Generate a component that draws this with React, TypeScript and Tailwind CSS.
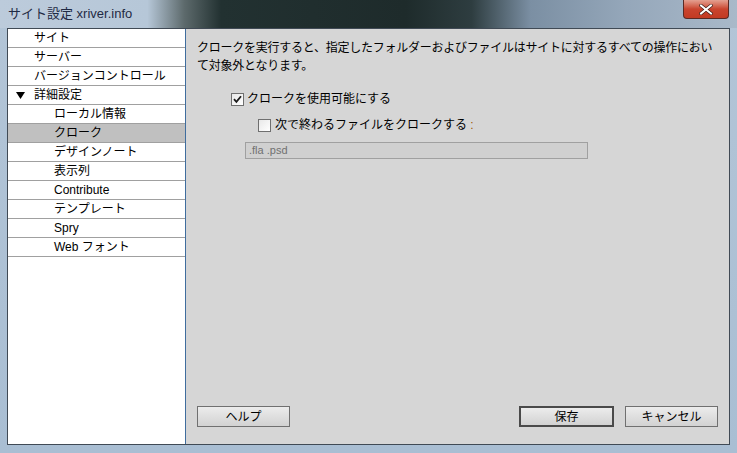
import type { ReactNode } from 'react';

const font = "font-['Liberation_Sans','Noto_Sans_CJK_JP',sans-serif]";

interface NavItem {
  label: string;
  level: 0 | 1;
  expanded?: boolean;
  selected?: boolean;
}

const NAV: NavItem[] = [
  { label: 'サイト', level: 0 },
  { label: 'サーバー', level: 0 },
  { label: 'バージョンコントロール', level: 0 },
  { label: '詳細設定', level: 0, expanded: true },
  { label: 'ローカル情報', level: 1 },
  { label: 'クローク', level: 1, selected: true },
  { label: 'デザインノート', level: 1 },
  { label: '表示列', level: 1 },
  { label: 'Contribute', level: 1 },
  { label: 'テンプレート', level: 1 },
  { label: 'Spry', level: 1 },
  { label: 'Web フォント', level: 1 },
];

function Checkbox({ checked }: { checked: boolean }) {
  return (
    <span className="flex h-[13px] w-[13px] items-center justify-center border border-[#6f6f6f] bg-gradient-to-br from-[#e8e8e8] to-white">
      {checked && (
        <svg width="9" height="9" viewBox="0 0 9 9">
          <path d="M1 4.2 L3.4 6.8 L8 1.2" fill="none" stroke="#1c1c1c" strokeWidth="1.8" />
        </svg>
      )}
    </span>
  );
}

function Button({ children, primary }: { children: ReactNode; primary?: boolean }) {
  return (
    <button
      className={
        primary
          ? 'h-[21px] w-[95px] border-2 border-[#4a4a4a] bg-gradient-to-b from-[#ececec] to-[#d2d2d2] text-[12px] text-black'
          : 'h-[21px] w-[93px] border border-[#707070] bg-gradient-to-b from-[#ececec] to-[#d2d2d2] text-[12px] text-black'
      }
    >
      {children}
    </button>
  );
}

export default function App() {
  return (
    <div
      className={`${font} flex h-[453px] w-[737px] flex-col overflow-hidden bg-[linear-gradient(180deg,#b3c5d7_0%,#a9bed3_100%)]`}
    >
      {/* title bar */}
      <div className="relative flex h-[28px] shrink-0 items-start bg-[linear-gradient(90deg,#bccbdb_0%,#b6c7d8_20%,#5d6a6c_25%,#223131_30%,#1e2b2b_55%,#2e3d40_64%,#7b8fa3_72%,#95a7ba_85%,#a9b9c9_100%)]">
        <span className="ml-[8px] mt-[5px] text-[13px] leading-[17px] text-[#1f2a44]">サイト設定 xriver.info</span>
        <div className="absolute right-[8px] top-0 flex h-[19px] w-[46px] items-center justify-center rounded-b-[4px] border border-t-0 border-[#5a2a24] bg-gradient-to-b from-[#e3a091] via-[#c9442e] to-[#c23a22]">
          <svg width="14" height="11" viewBox="0 0 14 11">
            <path d="M2 1.5 L12 9.5 M12 1.5 L2 9.5" stroke="#3a1a14" strokeWidth="3.4" strokeLinecap="square" />
            <path d="M2 1.5 L12 9.5 M12 1.5 L2 9.5" stroke="#ffffff" strokeWidth="2" strokeLinecap="square" />
          </svg>
        </div>
      </div>

      {/* client area */}
      <div className="mx-[7px] mb-[8px] flex min-h-0 flex-1 border border-[#404a55]">
        {/* sidebar */}
        <div className="flex w-[178px] shrink-0 flex-col border-r border-[#3f6d9e] bg-white">
          {NAV.map((item) => (
            <div
              key={item.label}
              className={`flex h-[19px] items-center border-b border-[#a0a0a0] text-[12px] leading-[18px] text-black ${
                item.selected ? 'bg-[#c0c0c0]' : ''
              }`}
            >
              <span className="flex w-[25px] shrink-0 justify-center">
                {item.expanded && (
                  <svg width="9" height="7" viewBox="0 0 9 7">
                    <path d="M0 0 L9 0 L4.5 7 Z" fill="#000" />
                  </svg>
                )}
              </span>
              <span className={item.level === 1 ? 'pl-[21px]' : 'pl-[1px]'}>{item.label}</span>
            </div>
          ))}
        </div>

        {/* content */}
        <div className="flex flex-1 flex-col bg-[#d6d6d6] pl-[11px] pr-[11px] pt-[10px] pb-[17px] text-[12px] text-black">
          <p className="leading-[18px]">
            <span className="block whitespace-nowrap tracking-[-0.25px]">
              クロークを実行すると、指定したフォルダーおよびファイルはサイトに対するすべての操作におい
            </span>
            <span className="block whitespace-nowrap tracking-[-0.25px]">て対象外となります。</span>
          </p>

          <div className="ml-[34px] mt-[16px] flex items-center gap-[3px]">
            <Checkbox checked />
            <span className="leading-[16px]">クロークを使用可能にする</span>
          </div>
          <div className="ml-[61px] mt-[10px] flex items-center gap-[4px]">
            <Checkbox checked={false} />
            <span className="leading-[16px]">
              次で終わるファイルをクロークする <span className="text-[#a05a00]">:</span>
            </span>
          </div>
          <div className="ml-[48px] mt-[9px] flex h-[17px] w-[343px] items-center border border-[#a0a0a0] bg-[#d0d0d0] px-[3px] text-[11px] text-[#707070]">
            .fla .psd
          </div>

          <div className="mt-auto flex items-center">
            <Button>ヘルプ</Button>
            <div className="flex-1" />
            <Button primary>保存</Button>
            <div className="w-[11px]" />
            <Button>キャンセル</Button>
          </div>
        </div>
      </div>
    </div>
  );
}
